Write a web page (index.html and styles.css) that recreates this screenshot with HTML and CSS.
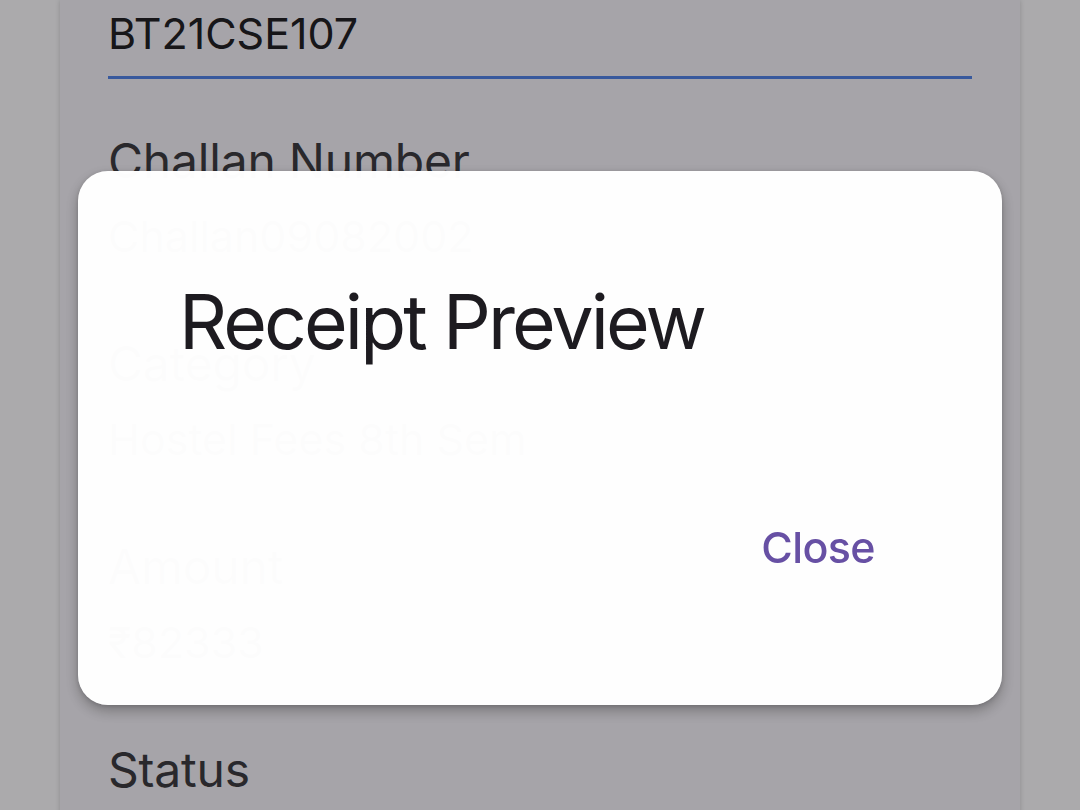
FILE: index.html
```html
<!DOCTYPE html>
<html lang="en">
<head>
<meta charset="utf-8">
<title>Receipt Preview</title>
<link rel="stylesheet" href="styles.css">
</head>
<body>
<main class="card">
  <div class="field">
    <div class="value value-focused">BT21CSE107</div>
  </div>
  <div class="field">
    <div class="label">Challan Number</div>
    <div class="value value-plain">Challan09082002</div>
  </div>
  <div class="field">
    <div class="label">Category</div>
    <div class="value">Hostel Fees 8th Sem</div>
  </div>
  <div class="field">
    <div class="label">Amount</div>
    <div class="value">₹82333</div>
  </div>
  <div class="field">
    <div class="label">Status</div>
  </div>
</main>

<div class="scrim"></div>

<div class="overlay">
  <section class="dialog" role="dialog" aria-labelledby="dlg-title">
    <h2 class="dialog-title" id="dlg-title">Receipt Preview</h2>
    <div class="dialog-actions">
      <button class="text-button" type="button">Close</button>
    </div>
  </section>
</div>
</body>
</html>
```

FILE: styles.css
```css
html, body {
  margin: 0;
  padding: 0;
  height: 100%;
  overflow: hidden;
}

body {
  background: #fcfbfe;
  font-family: Inter, "Noto Sans", "Liberation Sans", sans-serif;
}

.card {
  margin: 0 60px;
  min-height: 1000px;
  background: #f5f2f9;
  box-shadow: 0 0 5px rgba(0, 0, 0, 0.18);
  padding: 6.6px 48px 0;
  box-sizing: border-box;
}

.field {
  display: flex;
  flex-direction: column;
}

.field + .field {
  margin-top: 53px;
}

.label {
  font-size: 48px;
  line-height: 58px;
  color: #3d3c42;
  margin-bottom: 20px;
  letter-spacing: -0.2px;
}

.value {
  font-size: 43px;
  line-height: 52px;
  color: #222126;
  padding-bottom: 17px;
  border-bottom: 3px solid #d2ccd8;
}

.value-focused {
  border-bottom-color: #5384e8;
}

.value-plain {
  border-bottom-color: #e9e5ee;
}

.scrim {
  position: fixed;
  inset: 0;
  background: rgba(0, 0, 0, 0.32);
}

.overlay {
  position: fixed;
  inset: 0;
  display: flex;
  align-items: center;
  justify-content: center;
  padding-top: 66px;
  box-sizing: border-box;
}

.dialog {
  width: 924px;
  height: 534px;
  box-sizing: border-box;
  background: rgba(255, 255, 255, 0.988);
  border-radius: 30px;
  box-shadow: 0 6px 14px rgba(0, 0, 0, 0.28), 0 1px 4px rgba(0, 0, 0, 0.15);
  padding: 106px 127px 0 101px;
  display: flex;
  flex-direction: column;
}

.dialog-title {
  margin: 0;
  font-size: 75px;
  line-height: 90px;
  font-weight: 400;
  letter-spacing: -2.9px;
  color: #1d1b20;
}

.dialog-actions {
  display: flex;
  justify-content: flex-end;
  margin-top: 154px;
}

.text-button {
  font-family: Inter, "Noto Sans", "Liberation Sans", sans-serif;
  font-size: 43px;
  line-height: 52px;
  font-weight: 500;
  letter-spacing: -0.6px;
  color: #6750a4;
  background: none;
  border: 0;
  padding: 0;
  cursor: pointer;
}
```
